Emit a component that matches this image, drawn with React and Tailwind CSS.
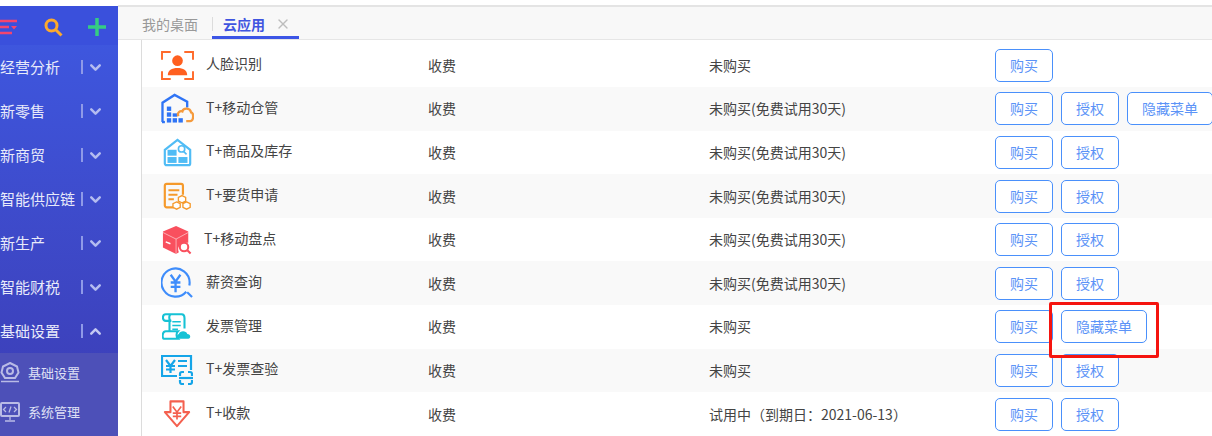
import React from "react";
import { ChevronDown, ChevronUp, X } from "lucide-react";

const IconFace = () => (
  <svg width="33" height="31" viewBox="0 0 34 32" fill="none">
    <path d="M1 10V2h9M24 2h9v8M33 22v8h-9M10 30H1v-8" stroke="#ff6a2b" strokeWidth="2" />
    <circle cx="17" cy="11" r="5.500" fill="#ff5f1f" />
    <path d="M7 26c0-5 4-7.500 10-7.500S27 21 27 26z" fill="#ff5f1f" />
  </svg>
);
const IconCloudHouse = () => (
  <svg width="33" height="31" viewBox="0 0 34 32" fill="none">
    <path d="M1.500 30V10L14 2l13 7v6" stroke="#2f74f5" strokeWidth="2.400" />
    <path d="M1 30h3" stroke="#2f74f5" strokeWidth="2.400" />
    <g fill="#2f74f5">
      <rect x="6" y="14" width="4.500" height="4.500" />
      <rect x="6" y="20" width="4.500" height="4.500" />
      <rect x="6" y="26" width="4.500" height="4.500" />
      <rect x="12" y="21" width="4.500" height="3.500" />
      <rect x="12" y="26" width="4.500" height="4.500" />
      <rect x="18" y="26" width="4.500" height="4.500" />
    </g>
    <path d="M18 24c-2-4 2-6 4-5 1-4 8-4 9 1 3 0 3 9-1 9h-4" stroke="#f59a3c" strokeWidth="2.400" />
  </svg>
);
const IconStore = () => (
  <svg width="29" height="29" viewBox="0 0 32 32" fill="none">
    <path d="M2 13L16 2l14 11v15a2 2 0 0 1-2 2H4a2 2 0 0 1-2-2z" stroke="#50bcf5" strokeWidth="2.400" />
    <rect x="5" y="13" width="10" height="6.500" fill="#50bcf5" />
    <rect x="5" y="21" width="10" height="6.500" fill="#50bcf5" />
    <rect x="17" y="21" width="10" height="6.500" fill="#50bcf5" />
    <circle cx="20.500" cy="12" r="3.500" stroke="#50bcf5" strokeWidth="1.800" />
    <path d="M23 15l3 3" stroke="#50bcf5" strokeWidth="1.800" />
  </svg>
);
const IconOrder = () => (
  <svg width="29" height="29" viewBox="0 0 32 32" fill="none">
    <path d="M12 28H4a2 2 0 0 1-2-2V4a2 2 0 0 1 2-2h16a2 2 0 0 1 2 2v10" stroke="#f59a2c" strokeWidth="2.400" />
    <path d="M6 9h12M6 14h10M6 19h6" stroke="#f59a2c" strokeWidth="2.200" />
    <path d="M21 15l4 2v4l-4 2-4-2v-4zM15 22l4 2v4l-4 2-4-2v-4zM26 22l4 2v4l-4 2-4-2v-4z" stroke="#f59a2c" strokeWidth="1.500" fill="#fff" />
  </svg>
);
const IconBox = () => (
  <svg width="30" height="30" viewBox="0 0 32 32" fill="none">
    <path d="M15 1l13 6v12h-3a7 7 0 0 0-7 10l-3 2-14-7V7z" fill="#f9505e" />
    <path d="M1 8l14 7 13-7M15 15v16" stroke="#fff" strokeWidth="1" opacity=".55" />
    <path d="M4 18l5 2" stroke="#fff" strokeWidth="1.500" />
    <circle cx="23.500" cy="23.500" r="4.500" stroke="#f9505e" strokeWidth="2.200" />
    <path d="M27 27l3.500 3.500" stroke="#f9505e" strokeWidth="2.200" />
  </svg>
);
const IconSalary = () => (
  <svg width="33" height="33" viewBox="0 0 34 34" fill="none">
    <path d="M26 25.500A14.500 14.500 0 1 1 29.500 16c0 1-.1 2-.3 3" stroke="#3f8dfb" strokeWidth="2.200" />
    <path d="M27 26l5 5" stroke="#3f8dfb" strokeWidth="2.200" />
    <path d="M10 8l5 7 5-7M15 15v11M10 16h10M10 20.500h10" stroke="#3f8dfb" strokeWidth="2.400" />
  </svg>
);
const IconScroll = () => (
  <svg width="30" height="27" viewBox="0 0 32 28" fill="none">
    <path d="M4 1h17c2 0 3 2 3 4v11M10 1c-3 0-3 7 0 7M4 1C0 1 0 8 4 8h6M8 8v11M2 27c-2 0-2-8 2-8h13c-2 2-2 6 0 8z" stroke="#16c2d5" strokeWidth="2.200" />
    <path d="M11 9h9M11 13h9M11 17h6" stroke="#16c2d5" strokeWidth="1.600" />
    <path d="M18 27c-3 0-3-4 0-5 1-4 8-4 9 0 4 0 4 5 1 5z" fill="#16c2d5" />
  </svg>
);
const IconCheck = () => (
  <svg width="32" height="30" viewBox="0 0 32 30" fill="none">
    <path d="M16 21H1V1h29v14" stroke="#15a5e8" strokeWidth="2.200" />
    <path d="M5 5l4.500 6L14 5M9.500 11v7M5 11h9M5 14.500h9" stroke="#15a5e8" strokeWidth="2.200" />
    <path d="M17 6h9M17 11h9" stroke="#15a5e8" strokeWidth="2.200" />
    <path d="M19 21v-2a2 2 0 0 1 2-2h2M27 17h2a2 2 0 0 1 2 2v2M19 25v2a2 2 0 0 0 2 2h2M27 29h2a2 2 0 0 0 2-2v-2" stroke="#15a5e8" strokeWidth="2.200" />
    <path d="M18 23h14" stroke="#15a5e8" strokeWidth="2.200" />
  </svg>
);
const IconDown = () => (
  <svg width="28" height="28" viewBox="0 0 30 30" fill="none">
    <path d="M8 1.500h14V13h6L15 28 2 13h6z" stroke="#f4604f" strokeWidth="2.200" strokeLinejoin="round" />
    <path d="M10.500 7l4.500 6 4.500-6M15 13v8M10.500 14h9M10.500 17.500h9" stroke="#f4604f" strokeWidth="1.800" />
  </svg>
);

const rows = [
  { icon: <IconFace />, name: "人脸识别", status: "未购买", btns: ["购买"] },
  { icon: <IconCloudHouse />, name: "T+移动仓管", status: "未购买(免费试用30天)", btns: ["购买", "授权", "隐藏菜单"] },
  { icon: <IconStore />, name: "T+商品及库存", status: "未购买(免费试用30天)", btns: ["购买", "授权"] },
  { icon: <IconOrder />, name: "T+要货申请", status: "未购买(免费试用30天)", btns: ["购买", "授权"] },
  { icon: <IconBox />, name: "T+移动盘点", status: "未购买(免费试用30天)", btns: ["购买", "授权"], shift: true },
  { icon: <IconSalary />, name: "薪资查询", status: "未购买(免费试用30天)", btns: ["购买", "授权"] },
  { icon: <IconScroll />, name: "发票管理", status: "未购买", btns: ["购买", "隐藏菜单"] },
  { icon: <IconCheck />, name: "T+发票查验", status: "未购买", btns: ["购买", "授权"] },
  { icon: <IconDown />, name: "T+收款", status: "试用中（到期日：2021-06-13）", btns: ["购买", "授权"] },
];

const menus = ["经营分析", "新零售", "新商贸", "智能供应链", "新生产", "智能财税", "基础设置"];

function Btn({ label }) {
  return (
    <button className={`h-[33px] shrink-0 rounded-[5px] border border-[#4a90fb] bg-white text-[14px] text-[#5b93f7] ${label.length > 2 ? "w-[86px]" : "w-[58px]"}`}>
      {label}
    </button>
  );
}

export default function App() {
  return (
    <div className="relative flex h-[436px] w-[1212px] overflow-hidden bg-white text-[#444] font-['Noto_Sans_CJK_SC','Noto_Sans',sans-serif]">
      <aside className="mt-[6px] flex h-[430px] w-[118px] shrink-0 flex-col bg-gradient-to-b from-[#3e59e2] to-[#3c3cb4] text-[#e8eafa]">
        <div className="flex h-[39px] shrink-0 items-center bg-[#3a50dc] pt-[3px]">
          <svg width="18" height="18" viewBox="0 0 18 18" fill="none" className="shrink-0">
            <path d="M0 3h17M0 9h9" stroke="#f4456f" strokeWidth="2.500" />
            <path d="M0 15h12" stroke="#f4456f" strokeWidth="2.500" />
            <path d="M11 8h6l-3 3.500z" fill="#f4456f" />
          </svg>
          <svg width="19" height="19" viewBox="0 0 19 19" fill="none" className="ml-[26px] shrink-0">
            <circle cx="7.500" cy="7.500" r="5.500" stroke="#fca92c" strokeWidth="3" />
            <path d="M11.500 11.500l6 6" stroke="#fca92c" strokeWidth="3" />
          </svg>
          <svg width="18" height="18" viewBox="0 0 18 18" fill="none" className="ml-[25px] shrink-0">
            <path d="M9 0v18M0 9h18" stroke="#35cc82" strokeWidth="3.500" />
          </svg>
        </div>
        {menus.map((m, i) => (
          <div key={m} className="flex h-[44px] shrink-0 items-center">
            <span className="w-[81px] whitespace-nowrap pb-[2px] text-[15px] leading-none">{m}</span>
            <span className="h-[14px] w-[2px] bg-[#8f9ae8]" />
            {i === 6 ? (
              <ChevronUp size={17} strokeWidth={3.500} className="ml-[4px] text-[#c4c9f2]" />
            ) : (
              <ChevronDown size={17} strokeWidth={3.500} className="ml-[4px] text-[#b4bcf0]" />
            )}
          </div>
        ))}
        <div className="flex flex-1 flex-col bg-[#4d50b8] text-[13px] text-[#dfe0f5]">
          <div className="flex h-[39px] shrink-0 items-center gap-[8px]">
            <svg width="20" height="22" viewBox="0 0 20 22" fill="none" className="shrink-0">
              <path d="M10 1l7 3.500 1.500 6L15 16H5L1.500 10.500 3 4.500z" stroke="#b9bbe6" strokeWidth="2" />
              <circle cx="10" cy="9" r="3" stroke="#b9bbe6" strokeWidth="2" />
              <path d="M1 19.500h18" stroke="#b9bbe6" strokeWidth="1.500" />
            </svg>
            <span>基础设置</span>
          </div>
          <div className="flex h-[40px] shrink-0 items-center gap-[8px]">
            <svg width="20" height="20" viewBox="0 0 20 20" fill="none" className="shrink-0">
              <rect x="1" y="1" width="18" height="13" rx="1" stroke="#b9bbe6" strokeWidth="2" />
              <path d="M6 5L3.500 7.500 6 10M14 5l2.500 2.500L14 10M11 4.500L9 10.500M10 14v4M5 19h10" stroke="#b9bbe6" strokeWidth="1.300" />
            </svg>
            <span>系统管理</span>
          </div>
        </div>
      </aside>

      <main className="flex min-w-0 flex-1 flex-col">
        <div className="mt-[5px] h-[2px] shrink-0 bg-[#e4e4e4]" />
        <div className="flex h-[33px] shrink-0 items-stretch border-b border-[#e6e6e6] bg-[#f8f8f8]">
          <span className="ml-[24px] flex w-[70px] items-center pt-[3px] text-[14px] text-[#999]">我的桌面</span>
          <div className="flex w-[87px] items-center border-b-[3px] border-[#3c55e6] pt-[5px]">
            <span className="h-[14px] w-px bg-[#dcdcdc]" />
            <span className="ml-[10px] text-[14px] font-bold text-[#3f55e0]">云应用</span>
            <X size={16} className="ml-[10px] text-[#bdbdbd]" />
          </div>
        </div>
        <div className="ml-[23px] flex flex-1 flex-col border-l border-[#dcdcdc] pt-[3.5px]">
          {rows.map((r, i) => (
            <div key={r.name} className={`flex h-[43.6px] shrink-0 items-center text-[14px] ${i % 2 ? "bg-[#f9f9f9]" : "bg-white"}`}>
              <div className="flex w-[64px] shrink-0 justify-center pl-[6px]">{r.icon}</div>
              <span className={`shrink-0 pb-[3px] ${r.shift ? "-ml-[2px] w-[224px]" : "w-[222px]"}`}>{r.name}</span>
              <span className="w-[281px] shrink-0">收费</span>
              <span className="w-[286px] shrink-0 whitespace-nowrap">{r.status}</span>
              <div className="flex gap-[8px]">
                {r.btns.map((b) => (
                  <Btn key={b} label={b} />
                ))}
              </div>
            </div>
          ))}
        </div>
      </main>

      <div className="absolute left-[1049px] top-[302px] h-[56px] w-[110px] rounded-[2px] border-[3px] border-[#f5140f]" />
    </div>
  );
}
